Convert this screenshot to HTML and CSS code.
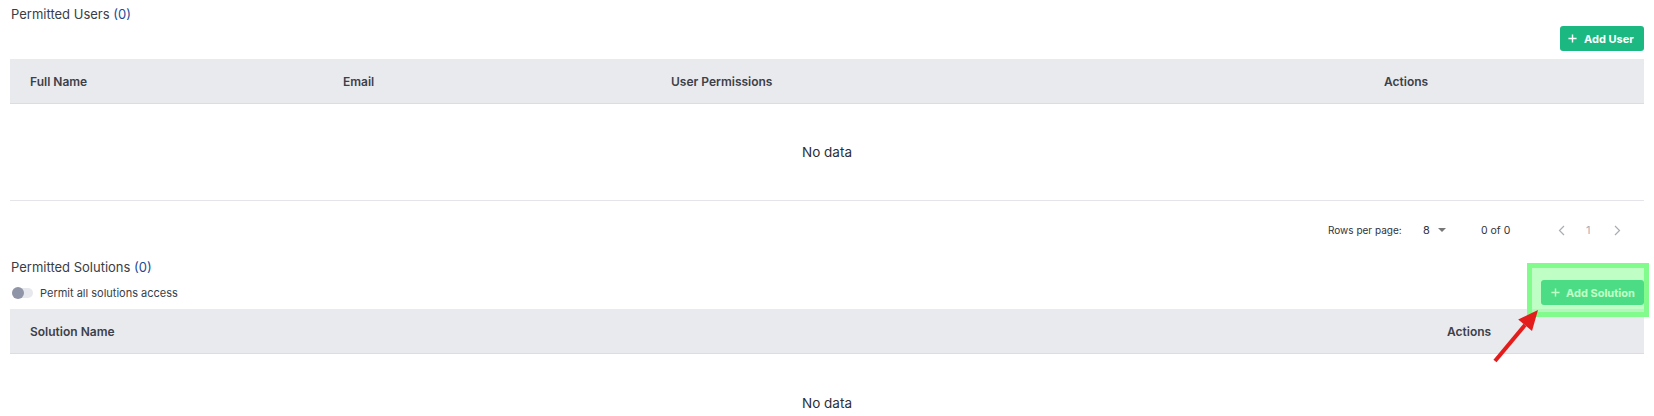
FILE: index.html
```html
<!DOCTYPE html>
<html>
<head>
<meta charset="utf-8">
<link rel="stylesheet" href="styles.css">
</head>
<body>
<div class="page">
  <section class="block">
    <h2 class="title">Permitted Users <span class="count">(0)</span></h2>
    <div class="toolbar toolbar-end">
      <button class="btn"><svg class="plus" viewBox="0 0 10 10"><path d="M5 0.5V9.5M0.5 5H9.5"/></svg>Add User</button>
    </div>
    <div class="table">
      <div class="thead users-cols">
        <div>Full Name</div>
        <div>Email</div>
        <div>User Permissions</div>
        <div>Actions</div>
      </div>
      <div class="tbody">No data</div>
    </div>
    <div class="pagination">
      <span class="rpp">Rows per page:</span>
      <span class="select">8 <svg class="caret" viewBox="0 0 8 4"><path d="M0 0H8L4 4Z"/></svg></span>
      <span class="range">0 of 0</span>
      <span class="pager">
        <span><svg class="chev" viewBox="0 0 7 11"><path d="M6 1L1.5 5.5L6 10"/></svg></span>
        <span>1</span>
        <span><svg class="chev" viewBox="0 0 7 11"><path d="M1 1L5.5 5.5L1 10"/></svg></span>
      </span>
    </div>
  </section>

  <section class="block">
    <h2 class="title">Permitted Solutions <span class="count">(0)</span></h2>
    <div class="toolbar">
      <label class="toggle"><span class="track"><span class="knob"></span></span>Permit all solutions access</label>
      <button class="btn btn-wide"><svg class="plus" viewBox="0 0 10 10"><path d="M5 0.5V9.5M0.5 5H9.5"/></svg>Add Solution</button>
    </div>
    <div class="table">
      <div class="thead solutions-cols">
        <div>Solution Name</div>
        <div>Actions</div>
      </div>
      <div class="tbody tbody-open">No data</div>
    </div>
  </section>

  <div class="highlight"></div>
  <svg class="arrow" viewBox="0 0 60 70" width="60" height="70">
    <line x1="10" y1="66" x2="40" y2="30" />
    <polygon points="53,15 47,36 33.2,24.5" />
  </svg>
</div>
</body>
</html>
```
FILE: styles.css
```css
* { box-sizing: border-box; }
html, body { margin: 0; padding: 0; background: #fff; }
body {
  font-family: Inter, "Noto Sans", "Liberation Sans", sans-serif;
  color: #333842;
  width: 1654px;
  height: 416px;
  overflow: hidden;
}
.page {
  position: relative;
  height: 416px;
  overflow: hidden;
  padding: 4px 10px 0 10px;
}
.title {
  margin: 0;
  font-size: 13px;
  font-weight: 400;
  line-height: 20px;
  color: #3a3d45;
  padding-left: 1px;
}
.count { color: #1d4a96; }
.toolbar {
  display: flex;
  align-items: center;
  justify-content: space-between;
  margin-top: 2px;
  height: 25px;
}
.toolbar-end { justify-content: flex-end; }
.block + .block .toolbar { margin-top: 3px; }
.btn {
  display: inline-flex;
  align-items: center;
  gap: 7px;
  height: 25px;
  width: 84px;
  padding: 0 0 0 8px;
  border: 0;
  border-radius: 3px;
  background: #1bb981;
  color: #fff;
  font-family: inherit;
  font-size: 11px;
  font-weight: 700;
  white-space: nowrap;
}
.btn-wide { width: 103px; padding-left: 10px; gap: 6px; }
.plus { width: 9px; height: 9px; stroke: #fff; stroke-width: 1.6; fill: none; flex-shrink: 0; }
.table { margin-top: 8px; }
.block + .block .table { margin-top: 4px; }
.thead {
  display: grid;
  align-items: center;
  height: 45px;
  padding-left: 20px;
  background: #e9eaee;
  border-bottom: 1px solid #dcdde2;
  font-size: 12px;
  font-weight: 600;
  color: #3c4049;
}
.users-cols { grid-template-columns: 313px 328px 713px 1fr; }
.solutions-cols { grid-template-columns: 1417px 1fr; }
.tbody {
  height: 97px;
  display: flex;
  align-items: center;
  justify-content: center;
  font-size: 13.5px;
  color: #2b2f38;
  border-bottom: 1px solid #e4e5e9;
}
.tbody-open { border-bottom: 0; }
.pagination {
  display: flex;
  align-items: center;
  height: 24px;
  margin: 17px 0 15px 0;
  padding-left: 1318px;
  font-size: 10px;
  color: #2f333b;
  white-space: nowrap;
}
.pagination > span { flex-shrink: 0; }
.rpp { width: 95px; }
.select {
  display: inline-flex;
  align-items: center;
  gap: 8px;
  width: 58px;
  font-size: 11px;
}
.caret { width: 8px; height: 4px; fill: #777; }
.range { width: 77px; font-size: 10.5px; }
.pager {
  display: flex;
  align-items: center;
  color: #a9acb3;
  font-size: 11px;
}
.pager > span { width: 28px; display: flex; align-items: center; }
.chev { width: 7px; height: 11px; fill: none; stroke: #a9acb3; stroke-width: 1.2; }
.toggle {
  display: flex;
  align-items: center;
  gap: 7px;
  font-size: 11px;
  color: #3a3d45;
  padding-left: 2px;
}
.track {
  position: relative;
  display: block;
  width: 21px;
  height: 10px;
  border-radius: 5px;
  background: #e6e8ee;
}
.knob {
  position: absolute;
  left: 0;
  top: -1px;
  width: 12px;
  height: 12px;
  border-radius: 50%;
  background: #8f95a6;
}
.highlight {
  position: absolute;
  left: 1527px;
  top: 263px;
  width: 122px;
  height: 54px;
  border: 5px solid #80fb8c;
  background: rgba(128, 255, 140, 0.5);
  pointer-events: none;
}
.arrow {
  position: absolute;
  left: 1485px;
  top: 295px;
}
.arrow line { stroke: #e31c1c; stroke-width: 4; }
.arrow polygon { fill: #e31c1c; }
```
